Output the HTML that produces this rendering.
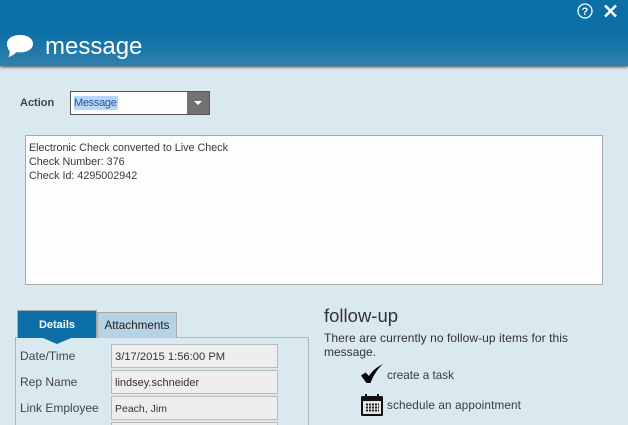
<!DOCTYPE html>
<html><head><meta charset="utf-8">
<style>
html,body{margin:0;padding:0;width:628px;height:425px;overflow:hidden}
body{background:#dae8f0;font-family:"Liberation Sans",sans-serif;color:#333}
#w{left:0;top:0;width:628px;height:425px;overflow:hidden;background:#dae8f0}
div,span{position:absolute;white-space:nowrap;box-sizing:border-box}
.t{font-size:11px;line-height:14px;color:#3a3a3a}
.f{left:111px;width:167px;height:24px;background:#eee;border:1px solid #bbb;font-size:11px;line-height:24px;padding-left:3px;color:#333}
.l{left:20px;font-size:12px;line-height:14px;color:#444}
</style></head><body><div id="w">
<div style="left:0;top:0;width:628px;height:66px;background:linear-gradient(#0b6fa5 0,#0b6fa5 32px,#3181ad 66px);box-shadow:0 1px 3px #444"></div>
<svg style="position:absolute;left:0;top:0" width="628" height="66">
<path d="M20 35c7.500 0 13 3.600 13 8.700s-5.500 8.700-13 8.700c-1.300 0-2.500-.1-3.800-.3-1.700 2.200-4.500 4-7.700 4.900.9-1.600 1.300-3.500 1.200-5.700C8.500 49.700 7 46.900 7 43.700 7 38.600 12.500 35 20 35z" fill="#fff"/>
<circle cx="585" cy="11" r="7" fill="none" stroke="#fff" stroke-width="1.300"/>
<path d="M605 5.500l11 11M616 5.500l-11 11" stroke="#fff" stroke-width="2.600" fill="none"/>
<text x="585" y="15" font-size="11" font-weight="bold" fill="#fff" text-anchor="middle" font-family="Liberation Sans">?</text>
</svg>
<div style="left:45px;top:33px;font-size:24px;line-height:28px;color:#fff">message</div>
<div style="left:20px;top:96px;font-size:11px;line-height:14px;font-weight:bold;color:#444">Action</div>
<div style="left:70px;top:91px;width:140px;height:24px;background:#fdfdfd;border:1px solid #555">
<span style="left:3px;top:4px;height:14px;background:#b3d7fd;font-size:11px;line-height:15px;letter-spacing:-.3px;padding-right:1px;color:#36558a">Message</span>
<div style="right:0;top:0;width:22px;height:22px;background:#727272"></div>
<div style="right:7px;top:9px;width:0;height:0;border:4px solid transparent;border-top:4px solid #fff;border-bottom:0"></div>
</div>
<div style="left:25px;top:135px;width:578px;height:150px;background:#fdfdfd;border:1px solid #a9a9a9"></div>
<div class="t" style="left:29px;top:141px;font-size:10.75px">Electronic Check converted to Live Check</div>
<div class="t" style="left:29px;top:155px;font-size:10.75px">Check Number: 376</div>
<div class="t" style="left:29px;top:169px;font-size:10.75px">Check Id: 4295002942</div>
<div style="left:15px;top:337px;width:294px;height:100px;border:1px solid #adb5b9"></div>
<div style="left:97px;top:312px;width:80px;height:26px;background:#b5d3e4;border:1px solid #aaa;border-bottom:0;text-align:center;font-size:11.7px;line-height:26px;color:#222">Attachments</div>
<div style="left:17px;top:310px;width:80px;height:28px;background:#0b6fa5;border:1px solid #aaa;border-bottom:0;text-align:center;font-size:11px;font-weight:bold;line-height:28px;color:#fff">Details</div>
<div style="left:43px;top:338px;width:0;height:0;border-left:14px solid transparent;border-right:14px solid transparent;border-top:6px solid #0b6fa5"></div>
<div class="l" style="top:349px;letter-spacing:.05px">Date/Time</div>
<div class="l" style="top:375px">Rep Name</div>
<div class="l" style="top:401px">Link Employee</div>
<div class="f" style="top:344px;font-size:11.2px">3/17/2015 1:56:00 PM</div>
<div class="f" style="top:370px">lindsey.schneider</div>
<div class="f" style="top:396px;font-size:10.5px">Peach, Jim</div>
<div class="f" style="top:422px"></div>
<div style="left:324px;top:306px;font-size:18.5px;line-height:20px;color:#333">follow-up</div>
<div class="t" style="left:324px;top:331px;color:#333;font-size:12px;letter-spacing:.07px">There are currently no follow-up items for this</div>
<div class="t" style="left:324px;top:345px;color:#333;font-size:12px">message.</div>
<svg style="position:absolute;left:355px;top:360px" width="40" height="60">
<path d="M6 15.500l4.500-3 3.500 3.500c3-5 8-9 14-12-5.500 5-9.500 11-12.500 19h-4z" fill="#000"/>
<rect x="6" y="36" width="22" height="20" rx="1.500" fill="#111"/>
<rect x="8" y="41" width="18" height="13" fill="#e6e6e6"/>
<path d="M11 34v5M23 34v5" stroke="#111" stroke-width="2"/>
<path d="M11 44.500h13M11 47.500h13M11 50.500h13" stroke="#222" stroke-width="2" stroke-dasharray="2 1"/>
</svg>
<div class="t" style="left:387px;top:369px;font-size:11.7px">create a task</div>
<div class="t" style="left:387px;top:399px;font-size:11.7px;letter-spacing:.15px">schedule an appointment</div>
</div></body></html>
